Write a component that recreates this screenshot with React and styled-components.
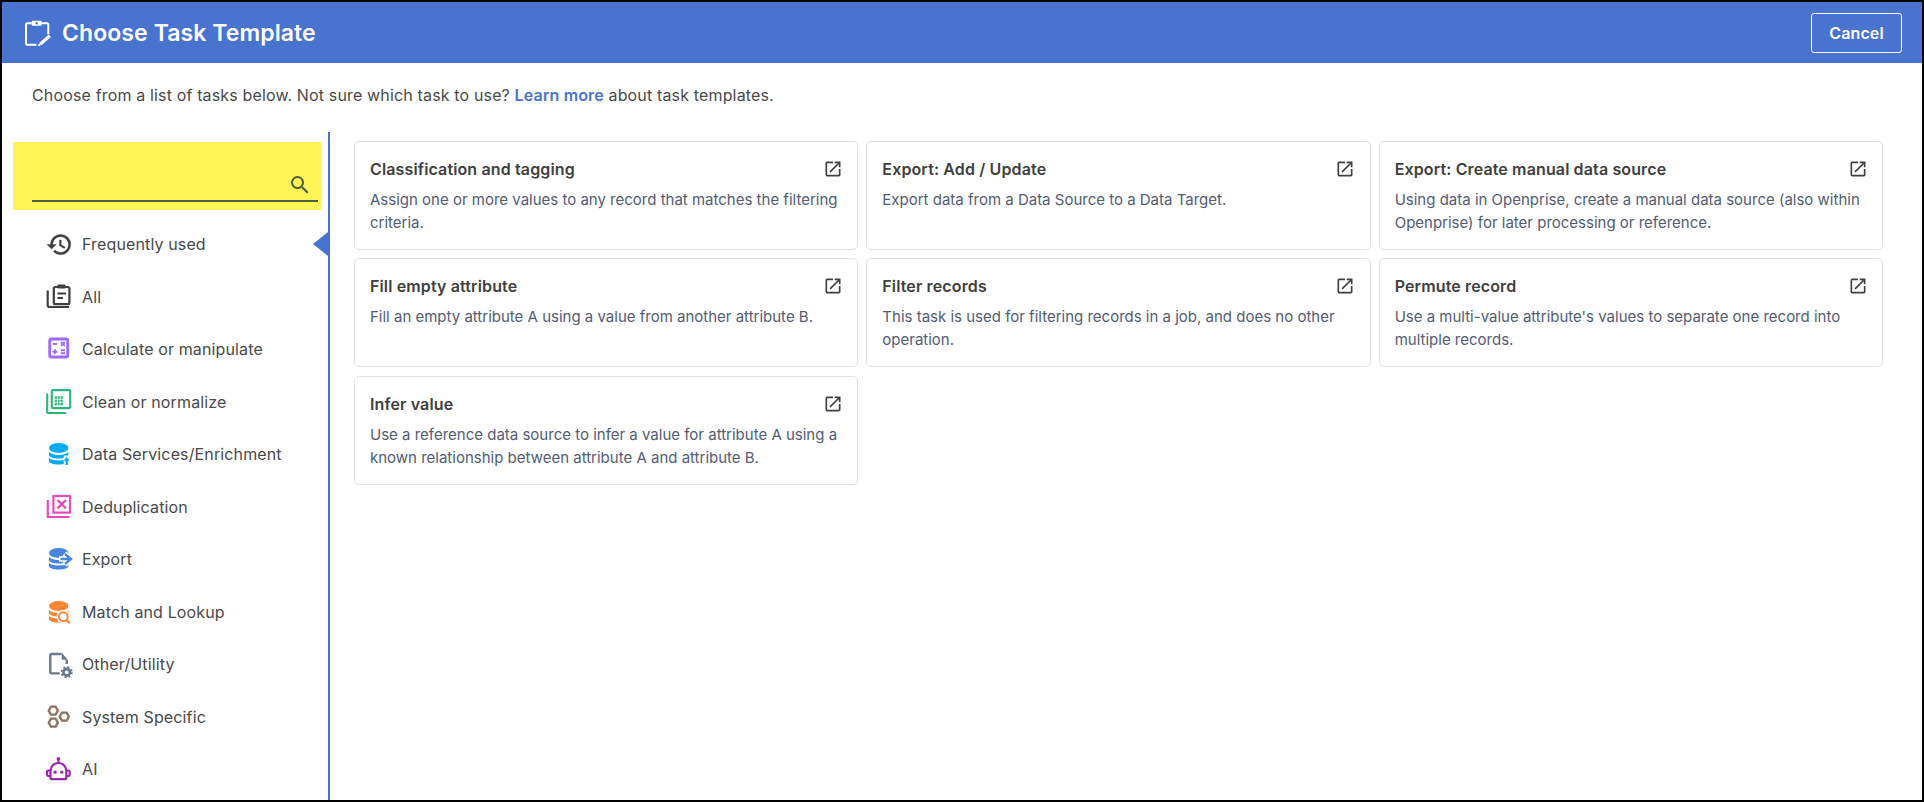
import React from "react";
import styled, { createGlobalStyle } from "styled-components";
import { MdOutlineOpenInNew, MdSearch } from "react-icons/md";

const Global = createGlobalStyle`
  html, body { margin: 0; padding: 0; background: #fff; }
  * { box-sizing: border-box; }
  body { font-family: Inter, "Liberation Sans", sans-serif; }
`;

const Frame = styled.div`
  width: 1924px;
  height: 802px;
  border: 2px solid #000;
  display: flex;
  flex-direction: column;
  overflow: hidden;
  background: #fff;
`;
const Header = styled.header`
  height: 61px;
  flex: none;
  background: #4873cf;
  display: flex;
  align-items: center;
  padding: 0 20px 0 23px;
  gap: 11px;
  color: #fff;
`;
const Title = styled.h1`
  margin: 0;
  flex: 1;
  font-size: 23px;
  font-weight: 600;
  line-height: 28px;
  letter-spacing: 0.08px;
`;
const CancelButton = styled.button`
  width: 91px;
  height: 40px;
  background: transparent;
  border: 1px solid #fff;
  border-radius: 3px;
  color: #fff;
  font: 600 16px Inter, sans-serif;
  letter-spacing: 0.13px;
`;
const Intro = styled.p`
  margin: 0;
  height: 69px;
  flex: none;
  padding: 20px 0 0 30px;
  font-size: 16px;
  line-height: 24px;
  letter-spacing: 0.15px;
  color: #4a4a4a;
`;
const LearnMore = styled.a`
  color: #4873cf;
  font-weight: 600;
`;
const Body = styled.div`
  flex: 1;
  min-height: 0;
  display: flex;
`;
const Sidebar = styled.aside`
  width: 328px;
  flex: none;
  border-right: 2px solid #4873cf;
  padding-top: 10px;
`;
const SearchBox = styled.div`
  width: 308px;
  height: 68px;
  margin-left: 11px;
  background: #fff556;
  padding: 0 3px 8px 19px;
  display: flex;
  align-items: flex-end;
`;
const SearchField = styled.div`
  flex: 1;
  height: 32px;
  border-bottom: 2px solid #4a5f3a;
  display: flex;
  justify-content: flex-end;
  align-items: center;
  color: #4a5f3a;
  padding-right: 6px;
  font-size: 24px;
`;
const Menu = styled.nav`
  margin-top: 8px;
`;
const MenuItem = styled.div`
  position: relative;
  height: 52.5px;
  padding-left: 44px;
  display: flex;
  align-items: center;
  gap: 10px;
  font-size: 16px;
  letter-spacing: 0.13px;
  color: #4a4a4a;
  ${(p) =>
    p.$active &&
    `&::after {
      content: "";
      position: absolute;
      right: 0;
      top: 14px;
      border-style: solid;
      border-width: 12px 15px 12px 0;
      border-color: transparent #4873cf transparent transparent;
    }`}
`;
const IconBox = styled.span`
  width: 26px;
  height: 26px;
  flex: none;
  display: flex;
  align-items: center;
  justify-content: center;
  color: ${(p) => p.$color};
  svg { display: block; overflow: visible; }
`;
const Main = styled.main`
  flex: 1;
  padding: 9px 39px 0 24px;
`;
const Grid = styled.div`
  display: grid;
  grid-template-columns: repeat(3, 1fr);
  grid-auto-rows: 109px;
  gap: 8.3px 8px;
`;
const Card = styled.article`
  border: 1px solid #dfe1e4;
  border-radius: 5px;
  padding: 15px 14.5px 0 15px;
  background: #fff;
`;
const CardHead = styled.div`
  display: flex;
  justify-content: space-between;
  align-items: center;
  height: 24px;
  margin-bottom: 7px;
`;
const CardTitle = styled.h3`
  margin: 0;
  font-size: 16px;
  font-weight: 600;
  letter-spacing: 0.13px;
  color: #404040;
`;
const CardLink = styled.span`
  display: flex;
  color: #404040;
  font-size: 20px;
`;
const CardText = styled.p`
  margin: 0;
  font-size: 15px;
  line-height: 23px;
  color: #535d74;
`;

const HeaderIcon = () => (
  <svg width="26" height="26" viewBox="0 0 26 26" fill="none" stroke="#fff" strokeWidth="2">
    <path d="M6.7 3.300H2.500a1.500 1.500 0 0 0-1.500 1.500V23.300a1.500 1.500 0 0 0 1.500 1.500H11.500" />
    <path d="M16.700 3.300h5.100a1.500 1.500 0 0 1 1.500 1.500v9.400" />
    <rect x="6.700" y="0.800" width="10" height="5" rx="1" fill="#fff" stroke="none" />
    <circle cx="11.700" cy="3.200" r="1.200" fill="#4873cf" stroke="none" />
    <path d="M24.800 15.800 15.500 24" strokeWidth="3.200" />
    <path d="M16 23.500 13.300 25.800" strokeWidth="1.800" />
  </svg>
);

const Svg = ({ children, fill = "none", sw = 2 }) => (
  <svg width="26" height="26" viewBox="0 0 26 26" fill={fill} stroke={fill === "none" ? "currentColor" : "none"} strokeWidth={sw}>
    {children}
  </svg>
);

const DbStack = () => (
  <>
    <ellipse cx="12.700" cy="7" rx="9.700" ry="5" />
    <path d="M3 11c2 2 5.500 3 9.700 3s7.700-1 9.700-3v3c0 2-4 3.500-9.700 3.500S3 16 3 14z" />
    <path d="M3 17c2 1.700 5.500 2.500 9.700 2.500s7.700-.8 9.700-2.500v3c0 2-4 3.500-9.700 3.500S3 22 3 20z" />
  </>
);

const HistoryIcon = () => (
  <svg width="27" height="27" viewBox="0 0 24 24" fill="currentColor" stroke="currentColor" strokeWidth="0.4">
    <path d="M13 3a9 9 0 0 0-9 9H1l3.890 3.890.07.140L9 12H6c0-3.870 3.130-7 7-7s7 3.130 7 7-3.130 7-7 7c-1.930 0-3.680-.790-4.940-2.060l-1.420 1.420A8.954 8.954 0 0 0 13 21a9 9 0 0 0 0-18zm-1 5v5l4.280 2.540.720-1.210-3.500-2.080V8H12z" />
  </svg>
);
const AllIcon = () => (
  <Svg sw={2.2}>
    <rect x="7.8" y="3" width="15.6" height="17.2" rx="1.5" />
    <rect x="11.5" y="0.6" width="8" height="4" rx="1" fill="currentColor" stroke="none" />
    <path d="M11.5 9.5h8.5M11.5 14h5.5" />
    <path d="M1.7 6.5V21a2 2 0 0 0 2 2h19.5" />
  </Svg>
);
const CalcIcon = () => (
  <Svg sw={2.8}>
    <rect x="3.700" y="3" width="18" height="18" rx="1.400" />
    <path d="M6.800 8h4.200M15 6l3.800 3.800M18.800 6 15 9.800M6.500 15.700h4.800M8.900 13.300v4.800M14.800 14.300h4.200M14.800 17.300h4.200" strokeWidth="1.900" />
  </Svg>
);
const CleanIcon = () => (
  <Svg sw={2.1}>
    <rect x="5.800" y="1.100" width="18.400" height="18" rx="1" />
    <path d="M1.200 4.500V23a1 1 0 0 0 1 1h18" />
    <rect x="8.800" y="7.300" width="8" height="9" fill="currentColor" stroke="none" />
    <path d="M11.400 7.300v9M14.100 7.300v9M8.800 10.300h8M8.800 13.300h8" stroke="#fff" strokeWidth="0.800" />
  </Svg>
);
const DataIcon = () => (
  <Svg fill="currentColor">
    <DbStack />
    <path d="M20.700 14.500v10" stroke="#fff" strokeWidth="6" />
    <path d="M20.700 16l3.200 3.700h-2.100V24h-2.200v-4.300h-2.100z" />
  </Svg>
);
const DedupIcon = () => (
  <Svg sw={2.2}>
    <rect x="7.400" y="2" width="16.600" height="16.600" />
    <path d="M1.800 6V23h21.500" />
    <path d="M11.500 6l8.400 8.400M19.900 6l-8.400 8.400" strokeWidth="2.400" />
  </Svg>
);
const ExportIcon = () => (
  <Svg fill="currentColor">
    <DbStack />
    <path d="M13 13h10M18.500 7.500l6 5.500-6 5.500" fill="none" stroke="#fff" strokeWidth="5.500" />
    <path d="M14.500 13h10.500M19 8l6 5-6 5" fill="none" stroke="currentColor" strokeWidth="2.300" />
  </Svg>
);
const MatchIcon = () => (
  <Svg fill="currentColor">
    <DbStack />
    <circle cx="17.300" cy="17.700" r="6.800" fill="#fff" />
    <path d="M21 21l3 3" stroke="#fff" strokeWidth="4" />
    <circle cx="17.300" cy="17.700" r="4.400" fill="none" stroke="currentColor" strokeWidth="2" />
    <path d="M20.300 21l3.500 3.200" fill="none" stroke="currentColor" strokeWidth="2.200" />
  </Svg>
);
const OtherIcon = () => (
  <Svg sw={2.400}>
    <path d="M15.500 3H5.500a1.200 1.200 0 0 0-1.200 1.200V21.200a1.200 1.200 0 0 0 1.200 1.200H14" />
    <path d="M15.700 1.700l6 7h-6z" fill="currentColor" stroke="none" />
    <path d="M20.700 8.700V13" />
    <circle cx="20.700" cy="21.300" r="7" fill="#fff" stroke="none" />
    <circle cx="20.700" cy="21.300" r="3.300" strokeWidth="2.800" />
    <circle cx="20.700" cy="21.300" r="5.200" strokeWidth="1.700" strokeDasharray="2.040 2.040" />
  </Svg>
);
const Hex = ({ x, y, r = 4.600 }) => {
  const pts = [0, 60, 120, 180, 240, 300]
    .map((a) => {
      const t = (a * Math.PI) / 180;
      return `${(x + r * Math.cos(t)).toFixed(2)},${(y + r * Math.sin(t)).toFixed(2)}`;
    })
    .join(" ");
  return <polygon points={pts} />;
};
const SystemIcon = () => (
  <Svg sw={2.300}>
    <Hex x={7.300} y={6.700} />
    <Hex x={18.300} y={12.700} />
    <Hex x={7.300} y={18.700} />
  </Svg>
);
const AiIcon = () => (
  <Svg sw={2.200}>
    <circle cx="12.400" cy="2.800" r="1.800" fill="currentColor" stroke="none" />
    <path d="M12.400 3v4" />
    <path d="M4.500 21.800V15c0-4.500 3.500-8 7.900-8s7.900 3.500 7.900 8v6.800c0 1-.6 1.400-1.400 1.400H5.900c-.8 0-1.400-.4-1.400-1.400z" />
    <path d="M4.500 14.500H2.300c-.8 0-1.200.5-1.200 1.200v3.100c0 .8.400 1.200 1.200 1.200h2.200M20.300 14.500h2.200c.8 0 1.200.5 1.200 1.200v3.100c0 .8-.4 1.200-1.200 1.200h-2.200" />
    <circle cx="9" cy="16.200" r="1.600" fill="currentColor" stroke="none" />
    <circle cx="15.800" cy="16.200" r="1.600" fill="currentColor" stroke="none" />
  </Svg>
);

const items = [
  { label: "Frequently used", color: "#3f3f3f", icon: <HistoryIcon />, active: true },
  { label: "All", color: "#3f3f3f", icon: <AllIcon /> },
  { label: "Calculate or manipulate", color: "#9d6bff", icon: <CalcIcon /> },
  { label: "Clean or normalize", color: "#2db67c", icon: <CleanIcon /> },
  { label: "Data Services/Enrichment", color: "#00aaff", icon: <DataIcon /> },
  { label: "Deduplication", color: "#e84fb5", icon: <DedupIcon /> },
  { label: "Export", color: "#4a86e0", icon: <ExportIcon /> },
  { label: "Match and Lookup", color: "#ff8533", icon: <MatchIcon /> },
  { label: "Other/Utility", color: "#6b7a90", icon: <OtherIcon /> },
  { label: "System Specific", color: "#8f7260", icon: <SystemIcon /> },
  { label: "AI", color: "#9b27af", icon: <AiIcon /> },
];

const cards = [
  ["Classification and tagging", "Assign one or more values to any record that matches the filtering criteria."],
  ["Export: Add / Update", "Export data from a Data Source to a Data Target."],
  ["Export: Create manual data source", "Using data in Openprise, create a manual data source (also within Openprise) for later processing or reference."],
  ["Fill empty attribute", "Fill an empty attribute A using a value from another attribute B."],
  ["Filter records", "This task is used for filtering records in a job, and does no other operation."],
  ["Permute record", "Use a multi-value attribute's values to separate one record into multiple records."],
  ["Infer value", "Use a reference data source to infer a value for attribute A using a known relationship between attribute A and attribute B."],
];

export default function App() {
  return (
    <>
      <Global />
      <Frame>
        <Header>
          <HeaderIcon />
          <Title>Choose Task Template</Title>
          <CancelButton>Cancel</CancelButton>
        </Header>
        <Intro>
          Choose from a list of tasks below. Not sure which task to use? <LearnMore>Learn more</LearnMore> about task templates.
        </Intro>
        <Body>
          <Sidebar>
            <SearchBox>
              <SearchField>
                <MdSearch />
              </SearchField>
            </SearchBox>
            <Menu>
              {items.map((it) => (
                <MenuItem key={it.label} $active={it.active}>
                  <IconBox $color={it.color}>{it.icon}</IconBox>
                  {it.label}
                </MenuItem>
              ))}
            </Menu>
          </Sidebar>
          <Main>
            <Grid>
              {cards.map(([t, d]) => (
                <Card key={t}>
                  <CardHead>
                    <CardTitle>{t}</CardTitle>
                    <CardLink>
                      <MdOutlineOpenInNew />
                    </CardLink>
                  </CardHead>
                  <CardText>{d}</CardText>
                </Card>
              ))}
            </Grid>
          </Main>
        </Body>
      </Frame>
    </>
  );
}
